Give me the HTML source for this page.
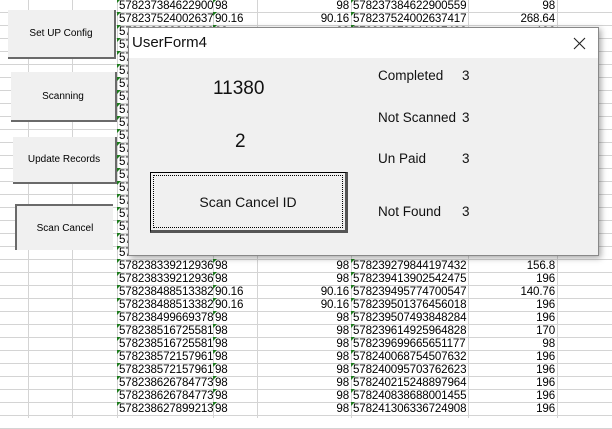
<!DOCTYPE html>
<html><head><meta charset="utf-8"><style>
*{margin:0;padding:0;box-sizing:border-box}
body{width:612px;height:418px;overflow:hidden;background:#fff;font-family:"Liberation Sans",sans-serif;position:relative}
.vl{position:absolute;top:0;height:418px;width:1px;background:#d4d4d4}
.hl{position:absolute;left:0;width:612px;height:1px;background:#d4d4d4}
.c{position:absolute;height:13px;font-size:11.6px;line-height:13px;color:#000;overflow:hidden;white-space:nowrap;letter-spacing:-0.15px}
.r{text-align:right;padding-right:2px}
.t{padding-left:2px}
.t:before{content:"";position:absolute;left:0;top:0;border-top:4px solid #1e7b1e;border-right:4px solid transparent}
.btn{position:absolute;background:#f0f0f0;font-size:10px;display:flex;align-items:center;justify-content:center;border-right:2px solid #6a6a6a;border-bottom:2px solid #6a6a6a}
.btn.p{border:none;border-left:2px solid #6a6a6a;border-top:2px solid #6a6a6a}
#dlg{position:absolute;left:128px;top:27px;width:471px;height:229px;background:#f0f0f0;border:1px solid #888;box-shadow:2px 2px 6px rgba(0,0,0,.35)}
#tb{height:30px;background:#fff;font-size:15px;line-height:30px;padding-left:3px;color:#111}
.lb{position:absolute;font-size:13.5px;color:#111}
</style></head><body>
<div class="vl" style="left:28px"></div><div class="vl" style="left:72px"></div><div class="vl" style="left:117px"></div><div class="vl" style="left:213px"></div><div class="vl" style="left:257px"></div><div class="vl" style="left:351px"></div><div class="vl" style="left:468px"></div><div class="vl" style="left:557px"></div>
<div id="hls"></div>
<div id="cells"></div>
<script>
var h='';for(var k=0;k<33;k++)h+='<div class="hl" style="top:'+(12+13*k)+'px"></div>';document.getElementById('hls').innerHTML=h;
var rows={0:["578237384622900559","98","98","578237384622900559","98"],1:["578237524002637417","90.16","90.16","578237524002637417","268.64"],
20:["578238339212936798","98","98","578239279844197432","156.8"],21:["578238339212936798","98","98","578239413902542475","196"],
22:["578238488513382290","90.16","90.16","578239495774700547","140.76"],23:["578238488513382290","90.16","90.16","578239501376456018","196"],
24:["5782384996693788","98","98","578239507493848284","196"],25:["578238516725581598","98","98","578239614925964828","170"],
26:["578238516725581598","98","98","578239699665651177","98"],27:["578238572157961998","98","98","578240068754507632","196"],
28:["578238572157961998","98","98","578240095703762623","196"],29:["5782386267847739","98","98","578240215248897964","196"],
30:["5782386267847739","98","98","578240838688001455","196"],31:["578238627899213598","98","98","578241306336724908","196"]};
var s='';for(var i=0;i<32;i++){var y=13*i-1;var d=rows[i]||["578238339212936798","98","98","578239279844197432","196"];
s+='<div class="c t" style="left:117px;top:'+y+'px;width:96px">'+d[0]+'</div>';
s+='<div class="c t" style="left:213px;top:'+y+'px;width:44px">'+d[1]+'</div>';
s+='<div class="c r" style="left:257px;top:'+y+'px;width:94px">'+d[2]+'</div>';
s+='<div class="c t" style="left:351px;top:'+y+'px;width:117px">'+d[3]+'</div>';
s+='<div class="c r" style="left:468px;top:'+y+'px;width:89px">'+d[4]+'</div>';}
document.getElementById('cells').innerHTML=s;
</script>
<div class="btn" style="left:8px;top:10px;width:108px;height:49px">Set UP Config</div>
<div class="btn" style="left:11px;top:72px;width:106px;height:50px">Scanning</div>
<div class="btn" style="left:13px;top:137px;width:104px;height:47px">Update Records</div>
<div class="btn p" style="left:15px;top:204px;width:98px;height:46px">Scan Cancel</div>
<div id="dlg">
<div id="tb">UserForm4<svg style="position:absolute;right:12px;top:9px" width="13" height="13" viewBox="0 0 13 13"><path d="M1 1L12 12M12 1L1 12" stroke="#222" stroke-width="1.1"/></svg></div>
<div class="lb" style="left:84px;top:50px;font-size:19px">11380</div>
<div class="lb" style="left:106px;top:103px;font-size:19px">2</div>
<div style="position:absolute;left:21px;top:144px;width:198px;height:61px;border:1px solid #000;border-right:3px solid #555;border-bottom:3px solid #555;padding:2px">
<div style="width:100%;height:100%;border:1px dotted #000;display:flex;align-items:center;justify-content:center;font-size:14px;color:#111">Scan Cancel ID</div></div>
<div class="lb" style="left:249px;top:40px">Completed</div><div class="lb" style="left:333px;top:40px">3</div>
<div class="lb" style="left:249px;top:82px">Not Scanned</div><div class="lb" style="left:333px;top:82px">3</div>
<div class="lb" style="left:249px;top:123px">Un Paid</div><div class="lb" style="left:333px;top:123px">3</div>
<div class="lb" style="left:249px;top:176px">Not Found</div><div class="lb" style="left:333px;top:176px">3</div>
</div>
</body></html>
